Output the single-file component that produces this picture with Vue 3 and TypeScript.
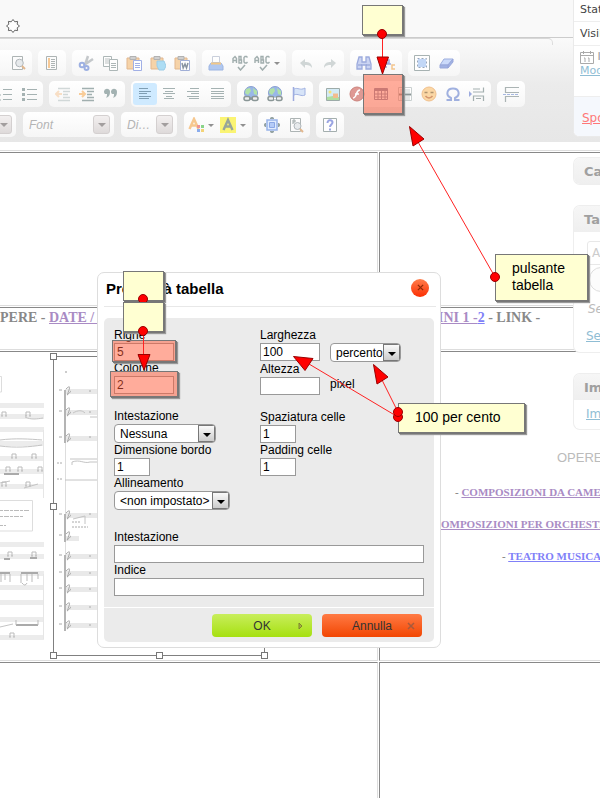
<script setup lang="ts">
import { ref } from 'vue'

interface Tool { icon: string; label: string; menu?: boolean; active?: boolean }

const sheet = '<path d="M2.5 1.5h10v13h-10z" fill="#fcfcfc" stroke="#a5adad"/>'
const board = '<path d="M1 3h12v11H1z" fill="#f6cfa0" stroke="#dfb184"/><path d="M4 1.500h6v3H4z" fill="#ccc" stroke="#aaa"/>'
const globe = '<circle cx="8" cy="7" r="6.500" fill="#8fb0e6" stroke="#7f97cc"/><path d="M3 3l4-1 1 3-3 4-3-2zM10 2l4 3v4l-3-1z" fill="#a9e0a0"/><rect x="1" y="10.500" width="6" height="4" rx="2" fill="#eee" stroke="#7e8c8c" stroke-width="1.500"/><rect x="9" y="10.500" width="6" height="4" rx="2" fill="#eee" stroke="#7e8c8c" stroke-width="1.500"/><path d="M6 12.500h4" stroke="#7e8c8c" stroke-width="2"/>'
const check = '<path d="M6 12l2.500 3L13 10" fill="none" stroke="#98a6a6" stroke-width="1.500"/><path d="M1 8V3.500L3 1.500 4.500 3.500V8M1 5.500h3.500M7 1.500V8h2.500V5H7h2V1.500zM15.500 2.500l-1-1h-1.500l-1 1V7l1 1h1.500l1-1" fill="none" stroke="#98a6a6" stroke-width="1.400"/>'

const icons: Record<string, string> = {
  preview: sheet + '<circle cx="9.500" cy="8" r="3.800" fill="#e5e9eb" stroke="#a9b0b4"/><path d="M12 11l3 3" stroke="#dfb083" stroke-width="2"/>',
  template: sheet + '<path d="M5 3v10" stroke="#f7c48c" stroke-width="2"/><path d="M7 4.500h4M7 6.500h4M7 8.500h4M7 10.500h4M7 12.500h4" stroke="#a5adad"/>',
  cut: '<path d="M10 1L7 10M15 4L6 10" stroke="#bfc3c6" stroke-width="2.500"/><circle cx="4" cy="10" r="2.300" fill="none" stroke="#94a9e0" stroke-width="2"/><circle cx="8.500" cy="13" r="2" fill="none" stroke="#94a9e0" stroke-width="2"/>',
  copy: '<path d="M1.500 1.500h8v10h-8z" fill="#fff" stroke="#a5b0b0"/><path d="M3 4h5M3 6h5M3 8h5" stroke="#b5bdbd"/><path d="M7.500 4.500h8v11h-8z" fill="#fff" stroke="#a5b0b0"/><path d="M9 8.500h5M9 10.500h5M9 12.500h5" stroke="#a5b0b0"/>',
  paste: board + '<path d="M7.500 5.500h8v10h-8z" fill="#fff" stroke="#98a8e4"/><path d="M9 8.500h5M9 10.500h5M9 12.500h5" stroke="#98a8e4"/>',
  pasteText: board + '<path d="M7 6l7 0 2 5-2 4-5 0-2-4z" fill="#a5daf4" stroke="#92c8e6"/>',
  pasteWord: board + '<path d="M6.500 5.500h9v10h-9z" fill="#fff" stroke="#98a8d4"/><path d="M8 8l1.200 5L11 9l1.500 4L14 8" fill="none" stroke="#7d8a98" stroke-width="1.500"/>',
  print: '<path d="M4.500 1.500h7v6h-7z" fill="#fff" stroke="#c4cbd8"/><path d="M3 8h10l2 3v4H1v-4z" fill="#aac3f0" stroke="#93aee0"/><path d="M3 8.500h10" stroke="#f2c27b" stroke-width="2"/>',
  spell: check, scayt: check,
  undo: '<path d="M2 8l5-4v3c4 0 7 1 7 6-2-3-4-3-7-3v3z" fill="#ccd3d3"/>',
  redo: '<path d="M14 8L9 4v3c-4 0-7 1-7 6 2-3 4-3 7-3v3z" fill="#ccd3d3"/>',
  find: '<path d="M3 2h3v5h4V2h3l2 7v5h-5v-4H6v4H1V9z" fill="#c6d0f2" stroke="#92a2da" stroke-width="1.300"/><path d="M2 10h4M10 10h4" stroke="#7f90cc"/>',
  replace: '<path d="M6 2v6h3V5H6M3 9h8M3 12h4" fill="none" stroke="#93a3db" stroke-width="1.500"/><path d="M15 10h-3v4h3" fill="none" stroke="#f3c083" stroke-width="1.500"/>',
  select: '<path d="M.5.5h15v15H.5z" fill="#fff" stroke="#9fabab"/><path d="M4 4h8v8H4z" fill="#bcd4f6"/><path d="M3.500 3.500h9v9h-9z" fill="none" stroke="#8c9cb5" stroke-dasharray="2 2"/>',
  eraser: '<path d="M6 4h9L10 10H2z" fill="#c6d7fa" stroke="#94a7dc"/><path d="M2 10h8v3H2zM10 10l5-6v3l-5 6z" fill="#98abe2" stroke="#8f9fd8"/>',
  numbered: '<path d="M6 3.500h9M6 8.500h9M6 13.500h9M1 4h2M2 2v3M1 8h2v2H1M1 13h2v2H1" fill="none" stroke="#9cabab"/>',
  bulleted: '<path d="M1 2h3v3H1zM1 7h3v3H1zM1 12h3v3H1z" fill="#9cabab"/><path d="M6 3.500h10M6 8.500h10M6 13.500h10" stroke="#9cabab"/>',
  outdent: '<path d="M3 2.500h12M8 5.500h7M8 8.500h5M8 11.500h7M3 14.500h12" stroke="#cdd5d5" stroke-width="1.300"/><path d="M1 8h6M4 5L1 8l3 3" fill="none" stroke="#f8dcc0" stroke-width="2"/>',
  indent: '<path d="M3 2.500h12M8 5.500h7M8 8.500h5M8 11.500h7M3 14.500h12" stroke="#98a8a8" stroke-width="1.300"/><path d="M0 8h6M3 5l3 3-3 3" fill="none" stroke="#f8c88f" stroke-width="2"/>',
  quote: '<path d="M2 8a3 3 0 1 1 5-2c0 4-2 5-4 6 1-2 1-3 1-4zM9 8a3 3 0 1 1 5-2c0 4-2 5-4 6 1-2 1-3 1-4z" fill="#9aabab"/>',
  left: '<path d="M2 2.500h9M2 5.500h12M2 7.500h8M2 10.500h12M2 12.500h10" stroke="#7796ab" stroke-width="1.200"/>',
  center: '<path d="M2 2.500h12M4 5.500h8M2 7.500h12M5 10.500h6M3 12.500h10" stroke="#9cabab" stroke-width="1.200"/>',
  right: '<path d="M5 2.500h9M2 5.500h12M6 7.500h8M2 10.500h12M4 12.500h10" stroke="#9cabab" stroke-width="1.200"/>',
  justify: '<path d="M2 2.500h13M2 5.500h13M2 7.500h13M2 10.500h13M2 12.500h13" stroke="#9cabab" stroke-width="1.200"/>',
  link: globe, unlink: globe + '<path d="M7 12.500h2" stroke="#fff" stroke-width="2"/>',
  anchor: '<path d="M2.500 1v14" stroke="#94a2dc" stroke-width="1.500"/><path d="M3 3c4-2 6 2 11-1v7c-4 2-7-2-11 0z" fill="#d4e2f8" stroke="#98abe0"/>',
  image: '<path d="M1.500 2.500h13v12h-13z" fill="#cfeaf6" stroke="#93a3a0"/><circle cx="5" cy="6" r="1.500" fill="#f5e16b"/><path d="M2 14v-3l6-1 6 1v3z" fill="#a8dc98"/><path d="M8 7.500h5V12H8z" fill="#f2b683"/>',
  flash: '<circle cx="8" cy="8" r="7" fill="#dc8f89" stroke="#c67770"/><path d="M11 4c-3 0-3 3-4 5s-1 3-3 3M6 8h4" fill="none" stroke="#fff" stroke-width="1.600"/>',
  table: '<path d="M1.500 2.500h13v11h-13z" fill="#fff" stroke="#8c8fa8"/><path d="M1 4h14" stroke="#8c8fa8" stroke-width="2"/><path d="M2 8h12M2 11h12M5 5v8M8.500 5v8M12 5v8" stroke="#8c8fa8"/>',
  rule: '<path d="M1.500 1.500h13v13h-13z" fill="#fff" stroke="#c5cccc"/><path d="M3 4h10M3 6h10M3 11h10M3 13h10" stroke="#c5cccc"/><path d="M2 8.500h12" stroke="#7f8b8b" stroke-width="2"/>',
  smile: '<circle cx="8" cy="8" r="7" fill="#fbd49c" stroke="#f0ba82"/><path d="M3.500 6.500h3M9.500 6.500h3" stroke="#a6885f" stroke-width="1.500"/><path d="M4.500 10c2 2.500 5 2.500 7 0" fill="none" stroke="#d08b60" stroke-width="1.500"/>',
  omega: '<path d="M1.500 14H6v-2C0 9 2 2.500 8 2.500S16 9 10 12v2h4.500" fill="none" stroke="#97a9dd" stroke-width="2"/>',
  pageBreak: '<path d="M4 6h10.500V1.500M4 3h7M4.500 15v-5h10v5M7 12.500h5" fill="none" stroke="#9ba8a8" stroke-width="1.200"/><path d="M0 5l3 3-3 3z" fill="#93a3dc"/>',
  readMore: '<path d="M16 1.500H2.500v5H16M16 14.500" fill="none" stroke="#a3adad" stroke-width="1.200"/><path d="M2.500 16v-5.500H16" fill="none" stroke="#a3adad" stroke-width="1.200"/><path d="M0 8.500h16" stroke="#9fb1df" stroke-dasharray="3 1"/>',
  textColor: '<path d="M1.500 12L6 2l4.500 10M3 8.500h6" fill="none" stroke="#f6c384" stroke-width="2.500"/><path d="M9 8h3v3H9z" fill="#e88"/><path d="M13 8h3v3h-3z" fill="#7dd07d"/><path d="M9 12h3v3H9z" fill="#7fa4ec"/><path d="M13 12h3v3h-3z" fill="#f3cf6a"/>',
  bgColor: '<path d="M0 0h16v16H0z" fill="#fbf465"/><path d="M3.500 13L8 3l4.500 10M5 9.500h6" fill="none" stroke="#8e9c90" stroke-width="2.400"/>',
  maximize: '<path d="M3 3h10v10H3z" fill="#dfebff" stroke="#8fade8" stroke-width="1.500"/><path d="M5.500 5.500h5v5h-5z" fill="#adc7f8" stroke="#7fa0e4"/><path d="M6 1.500L8 0l2 1.500zM6 14.500L8 16l2-1.500zM1.500 6L0 8l1.500 2zM14.500 6L16 8l-1.500 2z" fill="#8a9a9a" stroke="#8a9a9a"/>',
  blocks: sheet + '<path d="M5 7V3h2v2H5" fill="none" stroke="#95a0a0"/><circle cx="9.500" cy="9" r="3.500" fill="#e5e9eb" stroke="#a9b0b4"/><path d="M12 12l3 3" stroke="#dfb083" stroke-width="2"/>',
  help: '<path d="M1.500 1.500h13v13h-13z" fill="#fff" stroke="#9ba7a7"/><path d="M5.500 6c0-4 5-3 5-.5C10.500 7.500 8 7.500 8 10M8 11.500v2" fill="none" stroke="#8f9be0" stroke-width="2"/>'
}

const t = (icon: string, label: string, menu = false, active = false): Tool => ({ icon, label, menu, active })

const rowOne: Tool[][] = [
  [t('template', 'Nuova pagina'), t('preview', 'Anteprima')],
  [t('template', 'Modelli')],
  [t('cut', 'Taglia'), t('copy', 'Copia'), t('paste', 'Incolla'), t('pasteText', 'Incolla come testo'), t('pasteWord', 'Incolla da Word')],
  [t('print', 'Stampa'), t('spell', 'Controllo ortografico'), t('scayt', 'Controllo durante la digitazione', true)],
  [t('undo', 'Annulla modifica'), t('redo', 'Ripristina')],
  [t('find', 'Trova'), t('replace', 'Sostituisci')],
  [t('select', 'Seleziona tutto'), t('eraser', 'Elimina formattazione')]
]
const rowTwo: Tool[][] = [
  [t('numbered', 'Elenco numerato'), t('bulleted', 'Elenco puntato')],
  [t('outdent', 'Riduci rientro'), t('indent', 'Aumenta rientro'), t('quote', 'Citazione')],
  [t('left', 'Allinea a sinistra', false, true), t('center', 'Centra'), t('right', 'Allinea a destra'), t('justify', 'Giustifica')],
  [t('link', 'Collegamento'), t('unlink', 'Elimina collegamento'), t('anchor', 'Ancora')],
  [t('image', 'Immagine'), t('flash', 'Flash'), t('table', 'Tabella'), t('rule', 'Riga orizzontale'), t('smile', 'Emoticon'), t('omega', 'Carattere speciale'), t('pageBreak', 'Interruzione di pagina')],
  [t('readMore', 'Leggi tutto')]
]
const rowThree: Tool[][] = [
  [t('textColor', 'Colore testo', true), t('bgColor', 'Colore sfondo', true)],
  [t('maximize', 'Massimizza'), t('blocks', 'Mostra blocchi')],
  [t('help', 'Informazioni')]
]
const toolRows = [
  { name: 'one', groups: rowOne, combos: [] as { name: string; text: string; label: string }[] },
  { name: 'two', groups: rowTwo, combos: [] as { name: string; text: string; label: string }[] },
  {
    name: 'three',
    groups: rowThree,
    combos: [
      { name: 'wide', text: '', label: 'Formato' },
      { name: 'wide', text: 'Font', label: 'Carattere' },
      { name: 'narrow', text: 'Di…', label: 'Dimensione' }
    ]
  }
]

const leftStaves = [49, 60, 73, 87, 102, 115, 130, 188, 200, 217, 231, 246, 263, 281]
const rightStaves = [37, 58, 84, 161, 202, 219, 235, 253, 271]
const leftNotes = [[2, 60], [26, 60], [12, 102], [32, 102], [6, 115], [18, 115], [38, 115], [2, 130], [26, 130], [8, 200], [32, 200], [10, 281]]

const rows = ref('5')
const cols = ref('2')
const width = ref('100')
const unit = ref('percento')
const height = ref('')
const header = ref('Nessuna')
const border = ref('1')
const align = ref('<non impostato>')
const spacing = ref('1')
const padding = ref('1')
const caption = ref('')
const summary = ref('')
</script>

<template>
  <div class="page">
    <header class="top">
      <svg class="gear" viewBox="0 0 14 14"><path d="M7 .5l1.800 2.300 2.800-.4-.4 2.800L13.500 7l-2.300 1.800.4 2.800-2.800-.4L7 13.500l-1.800-2.300-2.800.4.4-2.800L.5 7l2.300-1.800-.4-2.800 2.800.4z" fill="#fff" stroke="#666" /></svg>
    </header>
    <div class="toolbar">
      <div v-for="row in toolRows" :key="row.name" class="tool-row" :class="row.name">
        <div v-for="c in row.combos" :key="c.label" class="combo" :class="c.name">
          <select :aria-label="c.label"><option>{{ c.text }}</option></select>
          <span class="combo-arrow"></span>
        </div>
        <div v-for="(g, i) in row.groups" :key="i" class="group">
          <button v-for="b in g" :key="b.label" type="button" class="tool" :class="{ menu: b.menu, active: b.active }" :aria-label="b.label">
            <svg viewBox="0 0 16 16" v-html="icons[b.icon]"></svg>
            <i v-if="b.menu" class="caret"></i>
          </button>
        </div>
      </div>
    </div>

    <main class="sheet">
      <div class="cell first"></div>
      <div class="cell last"></div>
      <div class="cell menu-line">PERE - <a href="#">DATE / CONCERTI</a></div>
      <div class="cell last menu-line indented"><a href="#">INI 1 -</a><a href="#" class="fresh">2</a> - LINK -</div>
      <div class="cell scores">
        <svg class="score" viewBox="0 0 53 300">
          <path d="M-1 20.500H1.500V36H-1M-1 144.500H32.500V175H-1" fill="none" stroke="#ddd" />
          <rect v-for="y in leftStaves" :key="y" x="0" :y="y - 2" width="44" height="5" fill="#ececec" />
          <path d="M43.500 74v68M43.500 218v65" stroke="#e6e6e6" />
          <path d="M0 84c15-2 30-1 42 0M0 90c15 2 30 1 42-1M25 61c6 3 12 2 18 1M24 132l14-4M0 127l10-2M0 271l13-3" fill="none" stroke="#c4c4c4" />
          <path v-for="(n, i) in leftNotes" :key="i" :d="`M${n[0]} ${n[1]}v-4h4v4M${n[0] - 1} ${n[1]}h2M${n[0] + 3} ${n[1]}h2`" fill="none" stroke="#bbb" />
          <path d="M4 118h15M0 217h10M21 217h17M16 269h22M4 203h6M30 202h7" stroke="#aaa" stroke-width="2" />
          <path d="M1 218v8M5 218v6M10 218v8M21 218v9M27 218v7M32 218v8M38 218v5M16 264v5M38 264v5M22 227q3 4 5 0" fill="none" stroke="#bbb" />
          <path d="M0 154.500h30M0 160.500h23M0 169.500h6" stroke="#bbb" stroke-dasharray="3 1 5 1" />
        </svg>
        <div class="selected">
          <svg class="score" viewBox="0 0 45 300">
            <rect v-for="y in rightStaves" :key="y" x="11" :y="y - 5" width="34" height="5" fill="#e9e9e9" />
            <rect x="11" y="179" width="14" height="5" fill="#e9e9e9" />
            <path d="M11.500 33v241" stroke="#ddd" />
            <path d="M11 33v53M11 157v28M11 198v76" stroke="#b4b4b4" stroke-width="2" />
            <path d="M11 123h34M16 102h29M18 108v-3c8-3 12 2 18 0h9M19 56c5-3 9-3 12 0M36 60h9M19 162l12-3v8" fill="none" stroke="#c4c4c4" />
            <path v-for="y in [32, 53, 79, 156, 177, 197, 214, 230, 248, 266]" :key="y" :d="`M12 ${y}q5-5 3 1t-2 5q5-4 3-4M5 ${y + 1}h3`" fill="none" stroke="#aaa" />
            <path v-for="y in [34, 55, 80, 157, 199, 216, 232, 250, 268]" :key="y" :d="`M35 ${y}h2`" stroke="#aaa" />
            <path d="M18 165h9M18 170h16M3 106h5M3 122h6" stroke="#aaa" stroke-dasharray="2 1" />
            <path d="M12 14v2" stroke="#999" />
          </svg>
          <i class="handle tl"></i><i class="handle ml"></i><i class="handle bl"></i><i class="handle bc"></i><i class="handle br"></i>
        </div>
      </div>
      <div class="cell last works">
        <h2>OPERE</h2>
        <p>- <a href="#">COMPOSIZIONI DA CAMERA</a></p>
        <p class="long"><a href="#">COMPOSIZIONI PER ORCHESTRA</a></p>
        <p class="short">- <a href="#" class="fresh">TEATRO MUSICALE</a></p>
      </div>
      <div class="cell end"></div>
      <div class="cell last end"></div>
    </main>

    <aside class="sidebar">
      <section class="publish">
        <p>Stato</p>
        <p class="vis">Visibilità</p>
        <div class="date">
          <span><svg viewBox="0 0 14 13"><path d="M.5 1.500h13v11H.5zM.5 4.500h13M3.500 0v3M10.500 0v3M5 7v4M9 7v4M4 7h1M8 7h1" fill="none" stroke="#aaa" /></svg> Inizio</span>
          <a href="#">Modifica</a>
        </div>
        <div class="trash"><a href="#">Sposta</a></div>
      </section>
      <section class="panel closed"><h3>Categorie</h3></section>
      <section class="panel tags">
        <h3>Tag</h3>
        <input aria-label="Nuovo tag" value="Aggiungi">
        <button type="button">Aggiungi</button>
        <em>Separa</em>
        <a href="#">Seleziona</a>
      </section>
      <section class="panel"><h3>Immagine</h3><a href="#">Imposta</a></section>
    </aside>

    <form class="dialog" @submit.prevent>
      <div class="title">
        <h1>Proprietà tabella</h1>
        <button type="button" class="close" aria-label="Chiudi"><svg viewBox="0 0 8 8"><path d="M1 1l6 6M7 1L1 7" stroke="#8e2a08" stroke-width="1.500" /></svg></button>
      </div>
      <div class="body">
        <div class="columns">
          <div class="col">
            <label for="rows">Righe</label>
            <input id="rows" v-model="rows" class="mid">
            <label for="cols">Colonne</label>
            <input id="cols" v-model="cols" class="mid">
            <label for="header" class="spaced">Intestazione</label>
            <div class="pick head"><select id="header" v-model="header"><option>Nessuna</option></select><span class="drop"></span></div>
            <label for="border">Dimensione bordo</label>
            <input id="border" v-model="border" class="small">
            <label for="align">Allineamento</label>
            <div class="pick align"><select id="align" v-model="align"><option>&lt;non impostato&gt;</option></select><span class="drop"></span></div>
          </div>
          <div class="col">
            <label for="width">Larghezza</label>
            <div class="pair">
              <input id="width" v-model="width" class="mid">
              <div class="pick unit"><select v-model="unit" aria-label="Unità larghezza"><option>percento</option></select><span class="drop"></span></div>
            </div>
            <label for="height">Altezza</label>
            <div class="pair"><input id="height" v-model="height" class="mid"><span class="px">pixel</span></div>
            <label for="spacing" class="spaced">Spaziatura celle</label>
            <input id="spacing" v-model="spacing" class="small">
            <label for="padding">Padding celle</label>
            <input id="padding" v-model="padding" class="small">
          </div>
        </div>
        <div class="col full">
          <label for="caption">Intestazione</label>
          <input id="caption" v-model="caption">
          <label for="summary">Indice</label>
          <input id="summary" v-model="summary">
        </div>
      </div>
      <div class="footer">
        <button type="submit" class="ok">OK<svg viewBox="0 0 8 8"><path d="M2 1v6l3-3z" fill="#a8b040" stroke="#7c8430" /></svg></button>
        <button type="button" class="cancel">Annulla<svg viewBox="0 0 8 8"><path d="M1 1l6 6M7 1L1 7" stroke="#a85a3c" stroke-width="1.500" /></svg></button>
      </div>
    </form>

    <div class="mark mark-table"></div>
    <div class="mark mark-rows"></div>
    <div class="mark mark-cols"></div>
    <div class="note note-top"></div>
    <div class="note note-rows"></div>
    <svg class="arrows under" viewBox="0 0 600 798"><circle cx="143" cy="299" r="4.500" /></svg>
    <div class="note note-cols"></div>
    <div class="note note-table">pulsante<br>tabella</div>
    <div class="note note-width">100 per cento</div>
    <svg class="arrows" viewBox="0 0 600 798">
      <path d="M382.500 34v24M495 277L418 142M143.500 331v24M398 412l-16-32M398 417l-89-53" />
      <path class="tip" d="M377 57h11.500L382.500 74zM409.500 126.500l14.500 12.500-11 7zM138 354.500h12L144 370zM373.500 364.500L388 377l-11 7zM293.500 356.500l19.500 2-8 12z" />
      <circle cx="382" cy="34" r="4.500" /><circle cx="495" cy="277" r="4.500" /><circle cx="143" cy="331" r="4.500" /><circle cx="398" cy="417" r="4.500" /><circle cx="398" cy="412" r="4.500" />
    </svg>
  </div>
</template>

<style>
body { margin: 0; background: #fff; }
</style>

<style scoped>
* { box-sizing: border-box; }
.page { position: relative; min-height: 100vh; overflow: hidden; display: flex; flex-direction: column; font-family: "Liberation Sans", Arial, sans-serif; font-size: 12px; color: #000; }
h1, h2, h3, p { margin: 0; }
button, input, select { font: inherit; color: inherit; margin: 0; border-radius: 0; }
select { appearance: none; border: 0; background: transparent; outline: 0; }
.top { height: 38px; padding: 19px 6px 0; background: #f9f9f9; border-bottom: 1px solid #ccc; }
.gear { width: 14px; height: 14px; display: block; }
.toolbar { display: flex; flex-direction: column; gap: 5px; height: 104px; background: linear-gradient(#fafafa, #ebebeb 45%, #e7e7e7); }
.toolbar::before { content: ""; flex: none; height: 6px; margin-right: 47px; border-top: 1px solid #d8d8d8; border-right: 1px solid #ddd; border-top-right-radius: 5px; }
.tool-row { display: flex; gap: 6px; height: 26px; flex: none; }
.one { margin-left: -20px; }
.two { margin-left: -9px; }
.three { margin-left: -75px; }
.group, .combo { display: flex; flex: none; padding: 2px; border-radius: 5px; background: linear-gradient(#fff, #f6f6f6); }
.tool { display: flex; align-items: center; justify-content: center; gap: 4px; width: 24px; height: 22px; padding: 0; border: 0; border-radius: 3px; background: none; }
.tool svg { width: 16px; height: 16px; flex: none; opacity: .9; }
.tool.menu { width: 32px; }
.tool.active { background: #cfeaff; }
.caret { border: 3px solid transparent; border-top-color: #909090; border-bottom: 0; margin-right: 2px; }
.combo { height: 25px; margin-right: 1px; padding: 3px 4px 3px 6px; font-style: italic; color: #b4b4b4; }
.combo.wide { width: 91px; }
.combo.narrow { width: 56px; }
.combo select { flex: 1; min-width: 0; padding: 0; }
.combo-arrow { display: flex; align-items: center; justify-content: center; width: 17px; height: 19px; border: 1px solid #d4d0d0; border-radius: 3px; background: linear-gradient(#f3f0f0, #dedada); }
.combo-arrow::before { content: ""; border: 4px solid transparent; border-top-color: #a29e9e; border-bottom: 0; }

.sheet { flex: 1; display: grid; grid-template-columns: 63% minmax(0, 1fr); grid-template-rows: 154px 43px 310px 1fr; row-gap: 1px; margin-top: 8px; padding-top: 1px; border-top: 1px solid #ddd; }
.cell { overflow: hidden; border: 1px solid #888; border-right-color: #ddd; border-bottom-color: #ddd; border-left: 0; }
.cell.last { border-left: 1px solid #888; border-right: 0; margin-left: 1px; }
.cell.end { border-bottom: 0; }
.cell a { color: #a98bc4; }
.cell a.fresh { color: #8080f8; }
.menu-line { padding-top: 1px; font: bold 14px/18px Georgia, "Liberation Serif", serif; color: #888; white-space: nowrap; }
.indented { padding-left: 58px; }
.scores { display: flex; padding-top: 4px; }
.scores .score { width: 53px; height: 300px; flex: none; display: block; }
.selected { position: relative; width: 212px; height: 300px; border: 1px solid #808080; }
.selected .score { width: 45px; }
.handle { position: absolute; width: 7px; height: 7px; border: 1px solid #777; background: #fff; }
.tl { left: -4px; top: -4px; }
.ml { left: -4px; top: 146px; }
.bl { left: -4px; bottom: -4px; }
.bc { left: 102px; bottom: -4px; }
.br { right: -4px; bottom: -4px; }
.works { padding-top: 98px; font: bold 11px/16px Georgia, "Liberation Serif", serif; color: #888; white-space: nowrap; }
.works h2 { margin: 0 0 18px 177px; font: 13px/16px "Liberation Sans", Arial, sans-serif; color: #bbb; }
.works p { margin: 0 0 16px 75px; }
.works .long { margin-left: 53px; }
.works .short { margin-left: 122px; }

.sidebar { position: absolute; top: 0; right: 0; width: 27px; display: flex; flex-direction: column; overflow: hidden; white-space: nowrap; font: 12px/14px "DejaVu Sans", Verdana, sans-serif; }
.sidebar a { color: #8fbdd4; }
.publish { height: 137px; margin-bottom: 20px; border: 1px solid #eaeaea; border-width: 0 0 1px 1px; border-radius: 0 0 0 6px; background: #fff; overflow: hidden; font-size: 11px; color: #444; }
.publish p { height: 22px; padding: 3px 6px; border-bottom: 1px solid #eee; }
.publish .vis { height: 24px; padding-top: 5px; }
.date { height: 50px; padding: 4px 6px; display: flex; flex-direction: column; color: #999; }
.date svg { width: 14px; height: 13px; vertical-align: middle; }
.trash { height: 40px; padding: 14px 8px; border-top: 1px solid #eee; background: #f5f8fd; font-size: 12px; }
.trash a { color: #f77; }
.panel { display: flex; flex-direction: column; align-items: flex-start; height: 57px; border: 1px solid #eee; border-right: 0; border-radius: 7px 0 0 7px; background: #fff; overflow: hidden; }
.panel h3 { width: 100%; height: 26px; padding: 7px 10px; background: linear-gradient(#f6f6f6, #efefef); font-size: 13px; line-height: 14px; color: #a0a0a0; }
.panel > a { margin: 7px 12px; flex: none; }
.panel.closed { height: 28px; margin-bottom: 20px; }
.panel.tags { height: 148px; margin-bottom: 20px; }
.tags input { width: 80px; height: 24px; margin: 9px 0 2px 13px; padding: 0 4px; border: 1px solid #e8e8e8; border-radius: 3px; color: #ccc; background: #fff; }
.tags button { height: 25px; margin-left: 15px; padding: 0 10px; border: 1px solid #ddd; border-radius: 12px; background: #fcfcfc; color: #aaa; }
.tags em { margin: 10px 14px 6px; color: #bbb; }

.dialog { position: absolute; left: 97px; top: 272px; width: 344px; padding: 0 6px 5px; border: 1px solid #ddd; border-radius: 7px; background: #fff; }
.title { display: flex; justify-content: space-between; align-items: center; height: 34px; margin-right: -2px; padding: 0 7px 4px 2px; border-bottom: 1px solid #e8e8e8; }
.title h1 { font-size: 15px; line-height: 18px; padding-top: 3px; }
.close { display: grid; place-items: center; width: 18px; height: 18px; padding: 0; border: 0; border-radius: 50%; background: linear-gradient(#ff7e4c, #fb2f03); }
.close svg { width: 7px; height: 7px; }
.body { margin: 11px 0 0; padding: 10px 10px 11px; border-radius: 5px 5px 0 0; background: #ebebeb; }
.columns { display: grid; grid-template-columns: 146px 1fr; }
.col { display: flex; flex-direction: column; align-items: flex-start; }
.col label { height: 15px; line-height: 15px; }
.col .spaced { margin-top: 15px; }
.col input { height: 18px; padding: 0 2px; border: 1px solid #999; background: #fff; outline: 0; }
.col .mid { width: 60px; }
.col .small { width: 36px; }
.full { margin-top: 20px; }
.full input { width: 100%; }
.pair { display: flex; gap: 10px; }
.px { line-height: 15px; }
.pick { display: flex; height: 19px; border: 1px solid #999; border-radius: 4px; background: #fff; overflow: hidden; }
.pick select { flex: 1; min-width: 0; padding: 0 0 0 5px; }
.head { width: 102px; }
.align { width: 116px; }
.unit { width: 71px; }
.drop { display: flex; align-items: center; justify-content: center; flex: none; width: 17px; border: 1px solid #777; background: linear-gradient(#fafafa, #ccc); }
.drop::before { content: ""; margin-top: 3px; border: 4px solid transparent; border-top-color: #000; border-bottom: 0; }
.footer { display: flex; justify-content: flex-end; gap: 10px; height: 34px; margin-top: 1px; padding: 6px 12px 4px; border-radius: 0 0 5px 5px; background: #ebebeb; }
.footer button { position: relative; width: 100px; height: 23px; padding: 0; border: 0; border-radius: 4px; color: #333; }
.footer svg { position: absolute; right: 7px; top: 8px; width: 8px; height: 8px; }
.ok { background: linear-gradient(#c8ee5c, #a6e010); }
.cancel { background: linear-gradient(#ff7a44, #f24602); }

.note, .mark { position: absolute; border: 1px solid #777; box-shadow: 1px 1px 0 #777, 2px 2px 1px #999; }
.note { padding: 5px 16px; background: #ffffd2; font-size: 14px; line-height: 17px; }
.mark { background: rgba(255, 90, 55, .5); }
.note-top { left: 362px; top: 5px; width: 41px; height: 30px; }
.note-rows { left: 123px; top: 271px; width: 41px; height: 30px; }
.note-cols { left: 123px; top: 302px; width: 41px; height: 30px; }
.note-table { left: 495px; top: 254px; width: 93px; height: 47px; }
.note-width { left: 398px; top: 403px; width: 127px; height: 30px; }
.mark-table { left: 363px; top: 74px; width: 40px; height: 40px; }
.mark-rows { left: 112px; top: 340px; width: 64px; height: 22px; }
.mark-cols { left: 110px; top: 371px; width: 68px; height: 26px; }
.arrows { position: absolute; left: 0; top: 0; width: 600px; height: 798px; pointer-events: none; fill: none; stroke: #f22; }
.arrows circle, .arrows .tip { fill: #f00; stroke: #900; }
</style>
